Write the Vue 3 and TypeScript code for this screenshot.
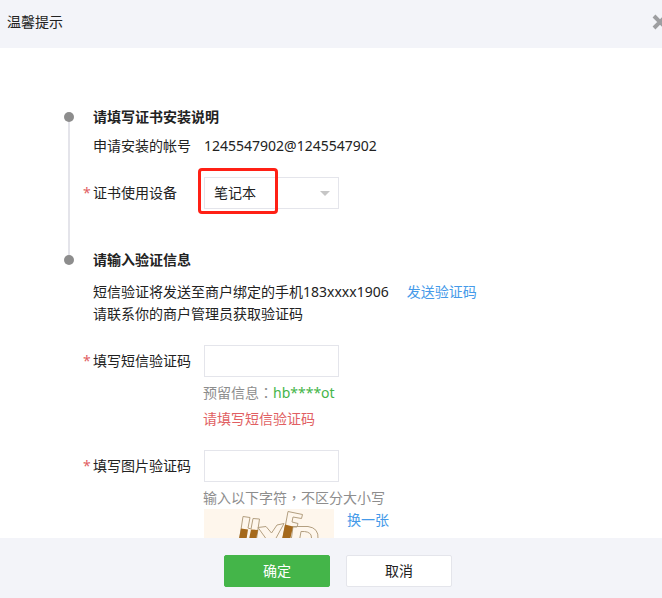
<script setup lang="ts">
import { ref } from 'vue'

const account = '1245547902@1245547902'
const device = ref('笔记本')
const smsCode = ref('')
const imageCode = ref('')
</script>

<template>
  <div class="dialog" role="dialog" aria-labelledby="dialog-title">
    <header class="dialog-head">
      <h1 id="dialog-title">温馨提示</h1>
      <button class="close" type="button" aria-label="关闭">
        <svg viewBox="0 0 16 16" width="16" height="16"><path d="M2 2 14 14M14 2 2 14" fill="none" stroke="#9d9ea1" stroke-width="4" /></svg>
      </button>
    </header>

    <main class="dialog-body">
      <section class="step linked">
        <h2>请填写证书安装说明</h2>
        <div class="row account">
          <span class="label">申请安装的帐号</span>
          <span>{{ account }}</span>
        </div>
        <div class="row field">
          <label class="label required" for="device">证书使用设备</label>
          <div class="select-wrap">
            <select id="device" v-model="device">
              <option>笔记本</option>
              <option>台式机</option>
            </select>
            <svg class="arrow" viewBox="0 0 10 5" width="10" height="5"><path d="M0 0H10L5 5Z" fill="#c6c6c6" /></svg>
            <span class="highlight"></span>
          </div>
        </div>
      </section>

      <section class="step">
        <h2>请输入验证信息</h2>
        <div class="notice">
          <p>短信验证将发送至商户绑定的手机183xxxx1906<a class="send" href="#">发送验证码</a></p>
          <p>请联系你的商户管理员获取验证码</p>
        </div>
        <div class="row field">
          <label class="label required" for="sms">填写短信验证码</label>
          <input id="sms" v-model="smsCode" type="text" />
        </div>
        <div class="help">
          <p class="muted">预留信息<span class="mark">：</span><span class="green">hb****ot</span></p>
          <p class="error">请填写短信验证码</p>
        </div>
        <div class="row field">
          <label class="label required" for="image">填写图片验证码</label>
          <input id="image" v-model="imageCode" type="text" />
        </div>
        <div class="help">
          <p class="muted">输入以下字符<span class="mark">，</span>不区分大小写</p>
          <div class="captcha">
            <svg viewBox="0 0 130 53" width="130" height="53" role="img" aria-label="图片验证码">
              <rect width="130" height="53" fill="#fef6ec" />
              <g fill="none" stroke="#b39f80" stroke-width="1">
                <path d="M39 7.500 46 8.500 44 19 47 20 49 9.500 55.500 10 51 40H34Z" />
                <path d="M54 18.500 62 17.500 67.500 24 73 16 80 14.500 71 31 69 42H61L63 31Z" />
                <path d="M84 2.500 98.500 5.500 97.500 9.500 89 8 88 13 94 14.500 93 18H88L83 40H77Z" />
                <path d="M89 17.500H104Q115 19 114 30L112 40H86ZM97 22.500 94 40H104Q109 32 107 26 105 22 97 22.500Z" />
              </g>
              <path d="M37 19.500 44 20.500 41 40H33ZM47 20.500 54 21 50 40H43ZM81 15.500 89 17.500 84 40H76Z" fill="#a5691c" />
            </svg>
            <a href="#">换一张</a>
          </div>
        </div>
      </section>
    </main>

    <footer class="dialog-foot">
      <button class="btn primary" type="button">确定</button>
      <button class="btn" type="button">取消</button>
    </footer>
  </div>
</template>

<style>
body {
  margin: 0;
}
</style>

<style scoped>
.dialog {
  display: flex;
  flex-direction: column;
  height: 100vh;
  overflow: hidden;
  background: #fff;
  color: #222;
  font: 14px/22px "Noto Sans", "Noto Sans CJK SC", sans-serif;
}
h1, h2, p {
  margin: 0;
  font-size: 14px;
}
h1 {
  font-weight: 400;
}
a {
  color: #459ae9;
  text-decoration: none;
}
.dialog-head {
  display: flex;
  flex: none;
  align-items: center;
  justify-content: space-between;
  box-sizing: border-box;
  height: 48px;
  padding: 0 0 4px 7px;
  background: #f3f4f9;
}
.close {
  display: flex;
  margin-right: -6px;
  padding: 0;
  border: 0;
  background: none;
}
.dialog-body {
  flex: 1;
  min-height: 0;
  overflow: hidden;
  padding: 58px 20px 0 64px;
}
.step {
  position: relative;
  padding-left: 29px;
}
.step::before {
  content: "";
  position: absolute;
  z-index: 1;
  top: 6px;
  left: 0;
  width: 10px;
  height: 10px;
  border-radius: 50%;
  background: #8d8d8d;
}
.linked {
  padding-bottom: 40px;
}
.linked::after {
  content: "";
  position: absolute;
  top: 12px;
  bottom: -8px;
  left: 4px;
  width: 2px;
  background: #e4e4ea;
}
.row {
  display: flex;
  align-items: center;
}
.label {
  position: relative;
  flex: none;
  width: 111px;
}
.required::before {
  content: "*";
  position: absolute;
  left: -10px;
  color: #e15f63;
}
.account {
  margin-top: 7px;
}
.field {
  margin-top: 20px;
}
select, input {
  display: block;
  box-sizing: border-box;
  width: 135px;
  height: 32px;
  padding: 0 9px;
  border: 1px solid #e4e5eb;
  border-radius: 0;
  background: #fff;
  color: #222;
  font: inherit;
  appearance: none;
}
.select-wrap {
  position: relative;
}
.arrow {
  position: absolute;
  top: 14px;
  right: 9px;
  pointer-events: none;
}
.highlight {
  position: absolute;
  top: -9px;
  left: -6px;
  box-sizing: border-box;
  width: 80px;
  height: 46px;
  border: 3px solid #ff2015;
  border-radius: 4px;
  pointer-events: none;
}
.notice {
  margin-top: 10px;
}
.send {
  margin-left: 18px;
}
.help {
  padding: 4px 0 0 110px;
}
.mark {
  font-family: "Noto Sans CJK TC", sans-serif;
}
.muted {
  color: #8d8d8d;
}
.green {
  color: #44b549;
}
.error {
  margin-top: 4px;
  color: #e15f63;
}
.captcha {
  display: flex;
  gap: 13px;
  padding-left: 1px;
}
.dialog-foot {
  display: flex;
  flex: none;
  align-items: center;
  justify-content: center;
  gap: 16px;
  box-sizing: border-box;
  height: 60px;
  padding: 6px 0 0 14px;
  background: #f3f4f9;
}
.btn {
  box-sizing: border-box;
  width: 106px;
  height: 32px;
  padding: 0;
  border: 1px solid #e4e5eb;
  border-radius: 2px;
  background: #fff;
  color: #222;
  font: inherit;
}
.primary {
  border-color: #44b549;
  background: #44b549;
  color: #fff;
}
</style>
